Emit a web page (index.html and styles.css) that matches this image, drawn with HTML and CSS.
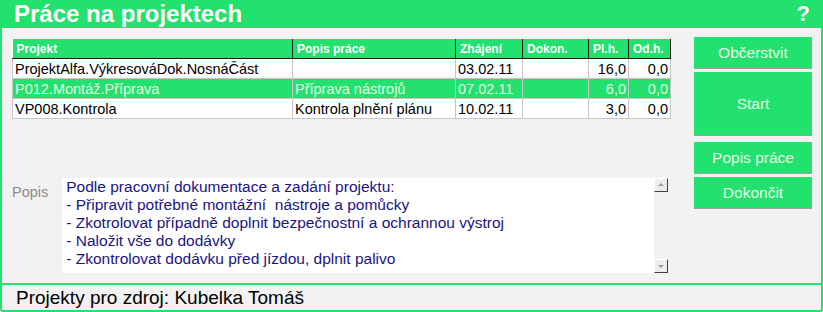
FILE: index.html
```
<!DOCTYPE html>
<html lang="cs">
<head>
  <meta charset="UTF-8">
  <title>Práce na projektech</title>
  <link rel="stylesheet" href="styles.css">
</head>
<body>

  <div class="window">
    <!-- Title bar -->
    <div class="titlebar">
      <h1>Práce na projektech</h1>
      <span class="help">?</span>
    </div>

    <!-- Main area -->
    <div class="content">
      <div class="left">
        <table class="grid">
          <colgroup>
            <col class="c-proj">
            <col class="c-popis">
            <col class="c-date">
            <col class="c-date2">
            <col class="c-num">
            <col class="c-num2">
          </colgroup>
          <thead>
            <tr>
              <th>Projekt</th>
              <th>Popis práce</th>
              <th>Zhájení</th>
              <th>Dokon.</th>
              <th>Pl.h.</th>
              <th>Od.h.</th>
            </tr>
          </thead>
          <tbody>
            <tr>
              <td>ProjektAlfa.VýkresováDok.NosnáČást</td>
              <td></td>
              <td>03.02.11</td>
              <td></td>
              <td class="num">16,0</td>
              <td class="num">0,0</td>
            </tr>
            <tr class="selected">
              <td>P012.Montáž.Příprava</td>
              <td>Příprava nástrojů</td>
              <td>07.02.11</td>
              <td></td>
              <td class="num">6,0</td>
              <td class="num">0,0</td>
            </tr>
            <tr>
              <td>VP008.Kontrola</td>
              <td>Kontrola plnění plánu</td>
              <td>10.02.11</td>
              <td></td>
              <td class="num">3,0</td>
              <td class="num">0,0</td>
            </tr>
          </tbody>
        </table>

        <div class="popis">
          <label>Popis</label>
          <div class="memo">
            <div class="memo-text">
              Podle pracovní dokumentace a zadání projektu:<br>
              - Připravit potřebné montážní&nbsp; nástroje a pomůcky<br>
              - Zkotrolovat případně doplnit bezpečnostní a ochrannou výstroj<br>
              - Naložit vše do dodávky<br>
              - Zkontrolovat dodávku před jízdou, dplnit palivo
            </div>
            <div class="scrollbar">
              <span class="arrow up"></span>
              <span class="arrow down"></span>
            </div>
          </div>
        </div>
      </div>

      <div class="buttons">
        <button>Občerstvit</button>
        <button class="tall">Start</button>
        <button class="spaced">Popis práce</button>
        <button>Dokončit</button>
      </div>
    </div>

    <!-- Footer -->
    <div class="footer">Projekty pro zdroj: Kubelka Tomáš</div>
  </div>

</body>
</html>
```

FILE: styles.css
```
body {
  margin: 0;
  font-family: "Liberation Sans", Arial, sans-serif;
  background: #f2f2f2;
}

.window {
  width: 823px;
  height: 312px;
  display: flex;
  flex-direction: column;
  background: #f2f2f2;
}

/* Title bar */
.titlebar {
  height: 28px;
  background: #22e16f;
  display: flex;
  align-items: center;
  justify-content: space-between;
  padding: 0 14px;
}

.titlebar h1 {
  margin: 0;
  font-size: 24px;
  font-weight: bold;
  color: #ffffff;
}

.help {
  font-size: 22px;
  font-weight: bold;
  color: #ffffff;
  margin-right: -1px;
}

/* Main */
.content {
  flex: 1;
  display: flex;
  border-left: 2px solid #22e16f;
  border-right: 2px solid #22e16f;
  padding: 9px 9px 10px 10px;
  gap: 23px;
}

.left {
  flex: 1;
  display: flex;
  flex-direction: column;
  justify-content: space-between;
}

.grid {
  border-collapse: collapse;
  table-layout: fixed;
  width: 658px;
  margin-top: 2px;
  font-size: 14.5px;
  background: #ffffff;
}

.c-proj { width: 280px; }
.c-popis { width: 163px; }
.c-date { width: 67px; }
.c-date2 { width: 66px; }
.c-num { width: 40px; }
.c-num2 { width: 42px; }

.grid th {
  background: #22e16f;
  color: #ffffff;
  font-size: 12px;
  font-weight: bold;
  text-align: left;
  height: 19px;
  padding: 0 4px;
  border-left: 1px solid #1a1a1a;
  border-bottom: 1px solid #1a1a1a;
}

.grid th:first-child {
  border-left: none;
}

.grid th:last-child {
  border-right: 1px solid #1a1a1a;
}

.grid td {
  height: 19px;
  padding: 0 2px;
  border: 1px solid #c6c6c6;
  border-top: none;
  white-space: nowrap;
  overflow: hidden;
  color: #000000;
}

.grid td.num {
  text-align: right;
}

.grid tr.selected td {
  background: #22e16f;
  color: #e4ffe4;
}

/* Popis memo */
.popis {
  display: flex;
  align-items: flex-start;
  gap: 14px;
}

.popis label {
  font-size: 14.5px;
  color: #8a8a8a;
  padding-top: 6px;
}

.memo {
  width: 606px;
  height: 95px;
  display: flex;
  background: #ffffff;
}

.memo-text {
  flex: 1;
  padding: 0 4px;
  font-size: 15.5px;
  line-height: 18px;
  color: #1c1480;
}

.scrollbar {
  width: 14px;
  background: #f2f2f2;
  display: flex;
  flex-direction: column;
  justify-content: space-between;
}

.arrow {
  height: 12px;
  width: 12px;
  background: #ececec;
  border: 1px solid;
  border-color: #ffffff #404040 #404040 #ffffff;
  position: relative;
}

.arrow::after {
  content: "";
  position: absolute;
  left: 3px;
  border-left: 3px solid transparent;
  border-right: 3px solid transparent;
}

.arrow.up::after {
  top: 4px;
  border-bottom: 3px solid #9a9a9a;
}

.arrow.down::after {
  top: 5px;
  border-top: 3px solid #9a9a9a;
}

/* Buttons */
.buttons {
  width: 120px;
  display: flex;
  flex-direction: column;
  gap: 3px;
}

.buttons button {
  height: 32px;
  background: #22e16f;
  color: #e6ffe6;
  font-family: "Liberation Sans", Arial, sans-serif;
  font-size: 15.5px;
  border: 1px solid;
  border-color: #22e16f #a0a0a0 #a0a0a0 #22e16f;
  padding: 0;
  cursor: pointer;
}

.buttons button.tall {
  height: 64px;
}

.buttons button.spaced {
  margin-top: 3px;
}

/* Footer */
.footer {
  height: 25px;
  border: 2px solid #22e16f;
  border-radius: 0 0 3px 3px;
  padding-left: 14px;
  font-size: 19px;
  line-height: 26px;
  color: #000000;
}
```
